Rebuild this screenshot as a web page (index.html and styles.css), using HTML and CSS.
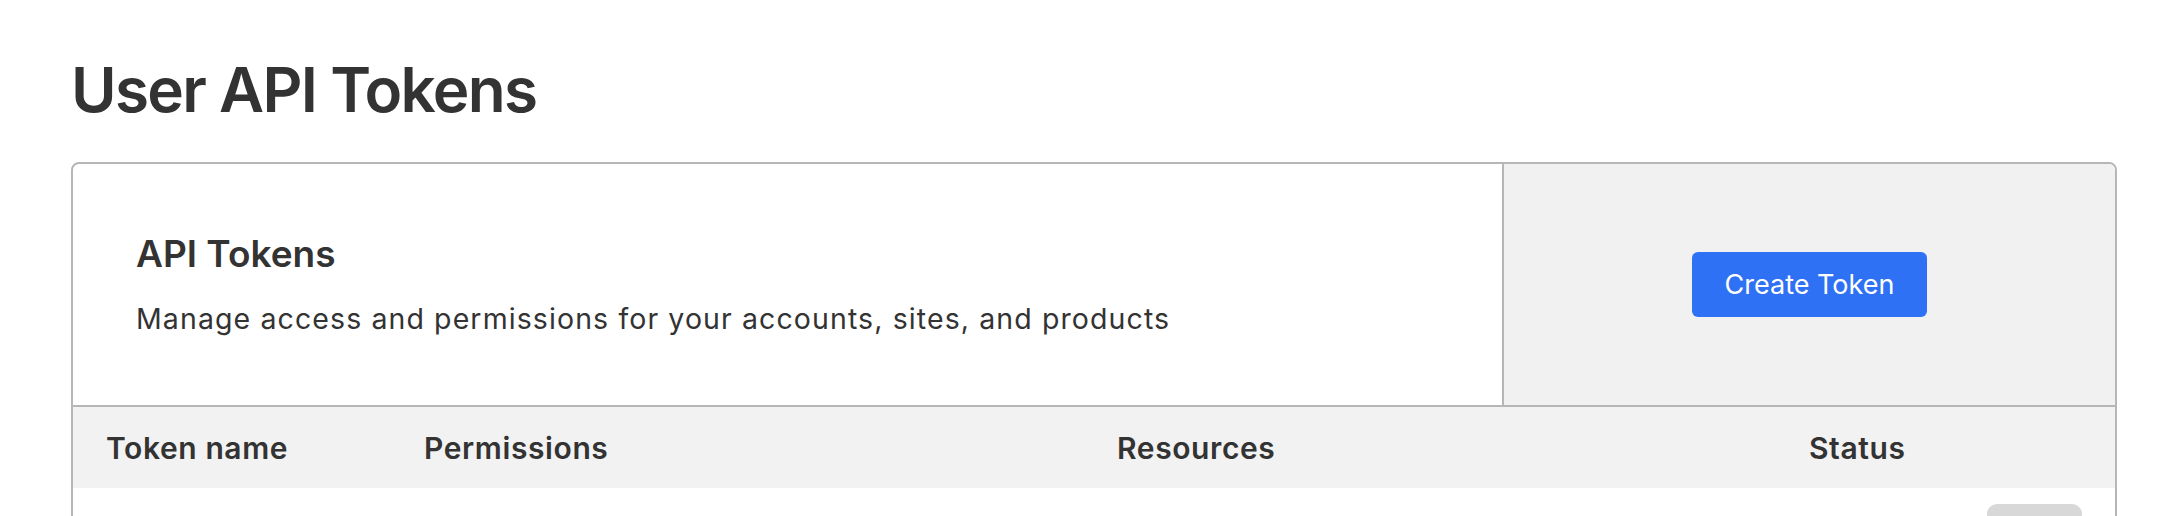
FILE: index.html
```html
<!doctype html>
<html>
<head>
<meta charset="utf-8">
<title>User API Tokens</title>
<link rel="stylesheet" href="styles.css">
</head>
<body>
<div class="page">
    <h1 class="title">User API Tokens</h1>

    <div class="card">
        <div class="intro">
            <div class="intro-text">
                <h2>API Tokens</h2>
                <p>Manage access and permissions for your accounts, sites, and products</p>
            </div>
            <div class="intro-action">
                <button class="btn">Create Token</button>
            </div>
        </div>

        <div class="thead">
            <span>Token name</span>
            <span>Permissions</span>
            <span>Resources</span>
            <span>Status</span>
            <span></span>
        </div>

        <div class="row">
            <span></span>
            <span></span>
            <span></span>
            <span><i class="pill"></i></span>
            <span><i class="more"></i></span>
        </div>
    </div>
</div>
</body>
</html>
```

FILE: styles.css
```css
html, body { margin:0; padding:0; background:#fff;}
body { font-family: Inter, "Noto Sans", "Liberation Sans", sans-serif; color:#333;}

.page { padding:0 65px 0 71px;}

.title { margin:0; padding-top:52px; font-size:62px; font-weight:600; line-height:76px; letter-spacing:-1.7px; height:110px;}

.card { border:2px solid #b6b6b6; border-radius:8px; overflow:hidden;}

.intro { display:flex; height:241px; border-bottom:2px solid #b6b6b6;}
.intro-text { flex:1; padding:0 0 0 63px; display:flex; flex-direction:column; justify-content:center;}
.intro-text h2 { margin:0; font-size:37px; font-weight:600; line-height:44px;}
.intro-text p { margin:25px 0 0; font-size:28.5px; line-height:36px; letter-spacing:1.1px;}
.intro-action { width:611px; background:#f1f1f1; border-left:2px solid #b6b6b6; display:flex; align-items:center; justify-content:center;}

.btn { background:#2f71f5; color:#fff; border:0; border-radius:6px; width:235px; height:65px; font-family:inherit; font-size:27px; cursor:pointer;}
.btn:hover { background:#2563e0;}

.thead, .row { display:grid; grid-template-columns:318px 693px 692px 1fr 95px; padding:0 33px;}
.thead { background:#f2f2f2; height:81px; align-items:center; font-size:30px; font-weight:600; letter-spacing:0.6px;}
.row { padding-top:16px; height:20px; overflow:hidden;}

.pill { display:block; width:74px; height:28px; margin:12px 0 0 13px; border-radius:14px; background:#d7f3df; border-top:2px solid #b6e6c4;}
.more { display:block; width:95px; height:50px; border-radius:10px; background:#d8d8d8;}
```
